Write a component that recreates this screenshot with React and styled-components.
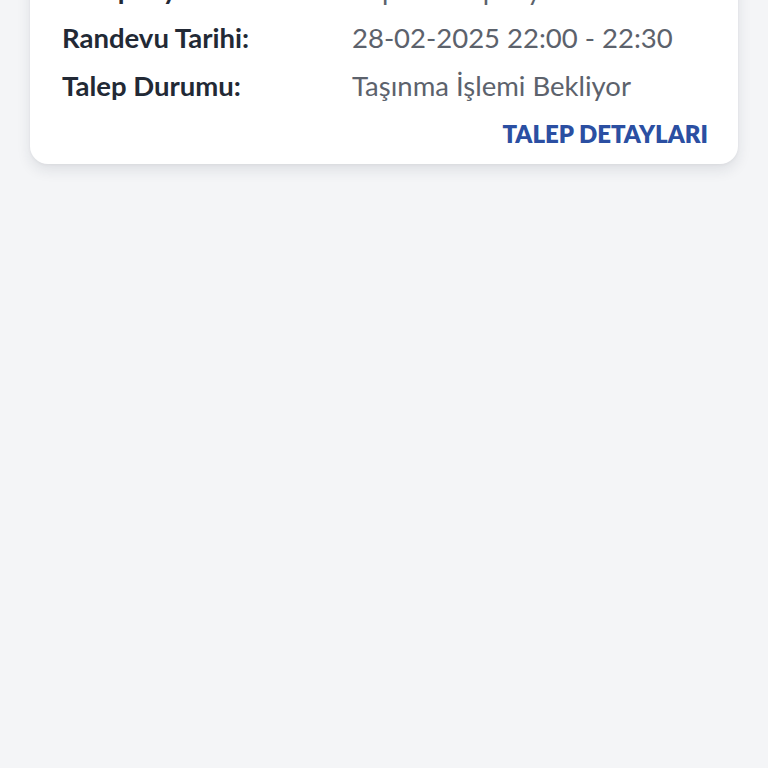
import React from "react";
import styled, { createGlobalStyle } from "styled-components";

const Global = createGlobalStyle`
  html, body { margin: 0; padding: 0; background: #f4f5f7; }
  body { font-family: "Lato", "Noto Sans", sans-serif; -webkit-font-smoothing: antialiased; }
  #root { min-height: 768px; }
`;

const Page = styled.div`
  width: 768px;
  height: 768px;
  overflow: hidden;
  background: #f4f5f7;
  padding: 0 30px;
  box-sizing: border-box;
`;

const Card = styled.div`
  margin-top: -47px;
  background: #ffffff;
  border-radius: 18px;
  box-shadow: 0 6px 14px rgba(30, 40, 60, 0.1), 0 1px 3px rgba(30, 40, 60, 0.05);
  padding: 20px 30px 15px 32px;
  display: flex;
  flex-direction: column;
`;

const Grid = styled.div`
  display: grid;
  grid-template-columns: 290px 1fr;
  row-gap: 14px;
`;

const Label = styled.div`
  font-size: 27.5px;
  line-height: 34px;
  font-weight: 700;
  color: #222935;
`;

const Value = styled.div`
  font-size: 27.5px;
  line-height: 34px;
  font-weight: 400;
  color: #5c626c;
`;

const Action = styled.a`
  align-self: flex-end;
  margin-top: 16px;
  font-size: 24px;
  line-height: 30px;
  font-weight: 800;
  color: #2b4fa2;
  text-decoration: none;
`;

const rows = [
  ["Kampanya:", "Süper Kampanya Paketi"],
  ["Randevu Tarihi:", "28-02-2025 22:00 - 22:30"],
  ["Talep Durumu:", "Taşınma İşlemi Bekliyor"],
];

export default function App() {
  return (
    <>
      <Global />
      <Page>
        <Card>
          <Grid>
            {rows.map(([l, v]) => (
              <React.Fragment key={l}>
                <Label>{l}</Label>
                <Value>{v}</Value>
              </React.Fragment>
            ))}
          </Grid>
          <Action href="#">TALEP DETAYLARI</Action>
        </Card>
      </Page>
    </>
  );
}
